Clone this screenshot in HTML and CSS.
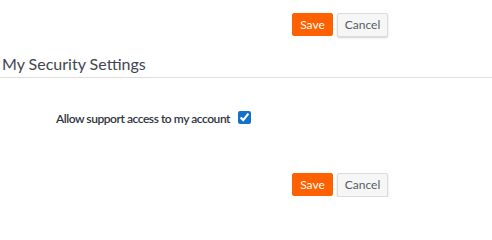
FILE: index.html
```html
<!DOCTYPE html>
<html>
<head>
<meta charset="utf-8">
<link rel="stylesheet" href="styles.css">
</head>
<body>
<div class="actions actions-top">
  <button class="btn btn-save">Save</button>
  <button class="btn btn-cancel">Cancel</button>
</div>
<h2 class="section-title">My Security Settings</h2>
<div class="form-row">
  <label class="field-label" for="support">Allow support access to my account</label>
  <input class="field-check" type="checkbox" id="support" checked>
</div>
<div class="actions actions-bottom">
  <button class="btn btn-save">Save</button>
  <button class="btn btn-cancel">Cancel</button>
</div>
</body>
</html>
```
FILE: styles.css
```css
html, body {
  margin: 0;
  padding: 0;
  background: #ffffff;
  font-family: Lato, "Open Sans", sans-serif;
}

.actions {
  display: flex;
  align-items: flex-start;
  gap: 4px;
  padding-left: 292px;
}

.actions-top {
  padding-top: 13px;
}

.actions-bottom {
  margin-top: 47px;
}

.btn {
  font-family: Lato, sans-serif;
  font-size: 12px;
  line-height: 14px;
  border-radius: 2px;
  cursor: pointer;
  margin: 0;
}

.btn-save {
  width: 41px;
  height: 23px;
  padding: 0;
  background: #ff6100;
  border: 1px solid #ff6100;
  color: #ffffff;
}

.btn-cancel {
  width: 51px;
  height: 24px;
  padding: 0;
  background: #f6f6f6;
  border: 1px solid #dcdcdc;
  color: #555b66;
  box-shadow: 0 1px 2px rgba(0, 0, 0, 0.18);
}

.section-title {
  margin: 17px 0 0 0;
  padding: 0 0 4px 2px;
  font-size: 16px;
  line-height: 19px;
  font-weight: 400;
  color: #414650;
  border-bottom: 1px solid #dddddd;
}

.form-row {
  display: flex;
  align-items: flex-start;
  gap: 8px;
  padding-left: 56px;
  margin-top: 33px;
}

.field-label {
  margin-top: 1px;
  font-size: 12px;
  line-height: 14px;
  font-weight: 600;
  letter-spacing: -0.45px;
  color: #2f343c;
}

.field-check {
  width: 13px;
  height: 13px;
  margin: 0;
  accent-color: #1570c8;
}
```
